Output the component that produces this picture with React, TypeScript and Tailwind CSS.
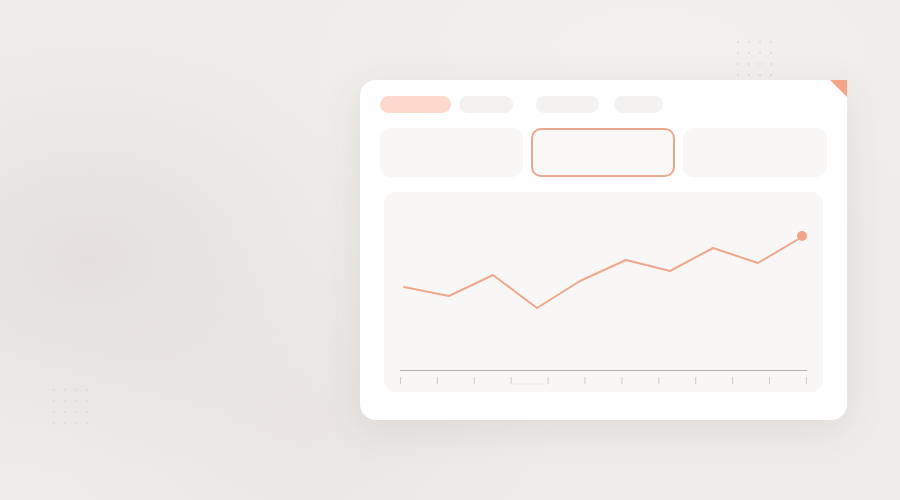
import React from "react";

const pts: [number, number][] = [
  [404, 287], [449, 296], [493, 275], [537, 308], [580, 281],
  [626, 260], [670, 271], [713, 248], [758, 263], [802, 237],
];

function Dots() {
  return (
    <div className="grid grid-cols-4 gap-[9px]">
      {Array.from({ length: 16 }).map((_, i) => (
        <div key={i} className="w-[2px] h-[2px] rounded-full bg-[#dedad5]" />
      ))}
    </div>
  );
}

export default function App() {
  const ox = 384;
  const oy = 192;
  const d = pts.map(([x, y], i) => `${i ? "L" : "M"}${x - ox} ${y - oy}`).join(" ");
  const ticks = Array.from({ length: 12 }).map((_, i) => 400.5 + i * 36.9 - ox);
  return (
    <div
      className="relative w-[900px] h-[500px] overflow-hidden bg-[#efede9] bg-[radial-gradient(ellipse_300px_220px_at_90px_260px,#e4e1dc,transparent),radial-gradient(ellipse_250px_180px_at_300px_420px,#e9e6e2,transparent),radial-gradient(ellipse_400px_200px_at_650px_60px,#f3f1ee,transparent)]"
      style={{ fontFamily: "Inter, 'Liberation Sans', sans-serif" }}
    >
      <div className="absolute left-[737px] top-[41px]">
        <Dots />
      </div>
      <div className="absolute left-[53px] top-[389px]">
        <Dots />
      </div>

      <div className="pl-[360px] pt-[80px]">
        <div className="relative w-[487px] h-[340px] bg-white rounded-2xl rounded-tr-none shadow-[0_10px_40px_rgba(80,70,60,0.10)] px-[20px] pt-[16px]">
          <div className="absolute right-0 top-0 w-[17px] h-[17px] bg-[#f5a487] [clip-path:polygon(0_0,100%_0,100%_100%)]" />
          <div className="flex items-center h-[17px]">
            <div className="w-[71px] h-[17px] rounded-full bg-[#fdd9cc]" />
            <div className="ml-[8px] w-[54px] h-[17px] rounded-full bg-[#f3f2f0]" />
            <div className="ml-[23px] w-[63px] h-[17px] rounded-full bg-[#f3f2f0]" />
            <div className="ml-[15px] w-[49px] h-[17px] rounded-full bg-[#f3f2f0]" />
          </div>
          <div className="mt-[15px] flex gap-[8px] h-[49px]">
            <div className="w-[143px] rounded-[10px] bg-[#f8f7f6]" />
            <div className="w-[144px] rounded-[10px] bg-[#f9f8f7] border-2 border-[#e9a88e]" />
            <div className="w-[144px] rounded-[10px] bg-[#f8f7f6]" />
          </div>
          <div className="mt-[15px] mx-[4px] h-[200px] rounded-xl bg-[#f9f7f5]">
            <svg width="439" height="200" viewBox="0 0 439 200">
              <path d={d} fill="none" stroke="#efa88c" strokeWidth="2" strokeLinejoin="round" strokeLinecap="round" />
              <circle cx={802 - ox} cy={236 - oy} r="5" fill="#f5a587" />
              <line x1={400 - ox} y1={178.5} x2={807 - ox} y2={178.5} stroke="#b3afab" strokeWidth="1" />
              {ticks.map((x, i) => (
                <line key={i} x1={x} y1={185} x2={x} y2={192} stroke="#cfcbc7" strokeWidth="1" />
              ))}
              <line x1={510 - ox} y1={192} x2={547 - ox} y2={192} stroke="#eeebe8" strokeWidth="1" />
            </svg>
          </div>
        </div>
      </div>
    </div>
  );
}
